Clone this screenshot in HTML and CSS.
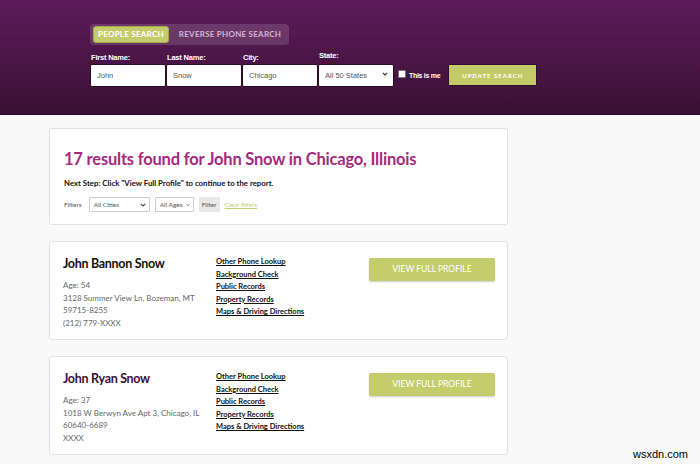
FILE: index.html
```html
<!DOCTYPE html>
<html lang="en">
  <head>
    <meta charset="UTF-8" />
    <meta name="viewport" content="width=device-width, initial-scale=1.0" />
    <title>People Search Results</title>
    <link rel="stylesheet" href="styles.css">
  </head>
  <body>
    <!-- Search header -->
    <div class="header">
      <div class="tabs">
        <span class="tab active">People Search</span>
        <span class="tab">Reverse Phone Search</span>
      </div>
      <form class="search-form">
        <div class="field">
          <label>First Name:</label>
          <input type="text" value="John" />
        </div>
        <div class="field">
          <label>Last Name:</label>
          <input type="text" value="Snow" />
        </div>
        <div class="field">
          <label>City:</label>
          <input type="text" value="Chicago" />
        </div>
        <div class="field">
          <label>State:</label>
          <div class="select-wrap">
            <select><option>All 50 States</option></select>
            <svg class="chevron" width="6" height="4" viewBox="0 0 6 4"><path d="M0.8 0.8 L3 3 L5.2 0.8" fill="none" stroke="#333" stroke-width="1.1"/></svg>
          </div>
        </div>
        <label class="this-is-me"><span class="box"></span>This is me</label>
        <button type="button" class="update-btn">Update Search</button>
      </form>
    </div>

    <div class="content">
      <!-- Summary -->
      <div class="card summary">
        <h1>17 results found for John Snow in Chicago, Illinois</h1>
        <p class="next-step">Next Step: Click "View Full Profile" to continue to the report.</p>
        <div class="filters">
          <span class="filters-label">Filters</span>
          <div class="mini-select wide">All Cities<svg width="6" height="4" viewBox="0 0 6 4"><path d="M0.8 0.8 L3 3 L5.2 0.8" fill="none" stroke="#444" stroke-width="1.1"/></svg></div>
          <div class="mini-select">All Ages<svg width="6" height="4" viewBox="0 0 6 4"><path d="M0.8 0.8 L3 3 L5.2 0.8" fill="none" stroke="#444" stroke-width="1.1"/></svg></div>
          <span class="filter-btn">Filter</span>
          <a href="#" class="clear">Clear filters</a>
        </div>
      </div>

      <!-- Results -->
      <div class="card result">
        <div class="info">
          <h2>John Bannon Snow</h2>
          <p>Age: 54</p>
          <p>3128 Summer View Ln, Bozeman, MT</p>
          <p>59715-8255</p>
          <p>(212) 779-XXXX</p>
        </div>
        <div class="links">
          <a href="#">Other Phone Lookup</a>
          <a href="#">Background Check</a>
          <a href="#">Public Records</a>
          <a href="#">Property Records</a>
          <a href="#">Maps &amp; Driving Directions</a>
        </div>
        <div class="action">
          <button type="button" class="profile-btn">View Full Profile</button>
        </div>
      </div>

      <div class="card result">
        <div class="info">
          <h2 class="visited">John Ryan Snow</h2>
          <p>Age: 37</p>
          <p>1018 W Berwyn Ave Apt 3, Chicago, IL</p>
          <p>60640-6689</p>
          <p>XXXX</p>
        </div>
        <div class="links">
          <a href="#">Other Phone Lookup</a>
          <a href="#">Background Check</a>
          <a href="#">Public Records</a>
          <a href="#">Property Records</a>
          <a href="#">Maps &amp; Driving Directions</a>
        </div>
        <div class="action">
          <button type="button" class="profile-btn">View Full Profile</button>
        </div>
      </div>
    </div>

    <div class="watermark">wsxdn.com</div>
  </body>
</html>
```

FILE: styles.css
```css
body {
  margin: 0;
  background-color: #f9f9f9;
  font-family: Lato, "Noto Sans", sans-serif;
  color: #222;
  height: 464px;
  overflow: hidden;
}

.header {
  height: 115px;
  box-sizing: border-box;
  padding: 24px 0 0 90px;
  background: linear-gradient(#5d1b5b, #3a1134);
  border-bottom: 1px solid #2a0a26;
}

.tabs {
  display: flex;
  width: fit-content;
  align-items: center;
  gap: 10px;
  padding: 2px 8px 2px 3px;
  background-color: rgba(255, 255, 255, 0.14);
  border-radius: 4px;
}

.tab {
  font-size: 8px;
  font-weight: 700;
  text-transform: uppercase;
  letter-spacing: 0.25px;
  color: #d6b3d4;
  line-height: 15px;
}

.tab.active {
  background-color: #c3cc69;
  color: #fff;
  padding: 0 4px;
  border-radius: 3px;
  border: 1px solid #a3ab4f;
}

.search-form {
  display: flex;
  align-items: flex-end;
  margin-top: 6px;
}

.field {
  display: flex;
  flex-direction: column;
  width: 76px;
}

.field label {
  font-family: "Liberation Sans", Arial, sans-serif;
  font-size: 7.5px;
  font-weight: 700;
  color: #fff;
  margin: 0 0 2px 1px;
  letter-spacing: -0.2px;
}

.field input,
.field select {
  box-sizing: border-box;
  width: 76px;
  height: 23px;
  margin: 0;
  padding: 0 6px;
  border: 1px solid #2d0c28;
  border-radius: 2px;
  background-color: #fff;
  font-family: "Liberation Sans", Arial, sans-serif;
  font-size: 7.5px;
  color: #555;
  outline: none;
}

.select-wrap {
  position: relative;
}

.field select {
  appearance: none;
  -webkit-appearance: none;
}

.chevron {
  position: absolute;
  right: 6px;
  top: 10px;
}

.this-is-me {
  display: flex;
  align-items: center;
  gap: 3px;
  height: 23px;
  margin-left: 4px;
  font-family: "Liberation Sans", Arial, sans-serif;
  font-size: 7px;
  font-weight: 700;
  color: #fff;
  letter-spacing: -0.3px;
}

.this-is-me .box {
  width: 6px;
  height: 6px;
  background: #fff;
  border: 1px solid #777;
  border-radius: 1px;
  margin-top: -3px;
}

.update-btn {
  box-sizing: border-box;
  width: 89px;
  height: 22px;
  margin: 0 0 1px 8px;
  background-color: #c3cb68;
  border: 1px solid #2e0e28;
  border-radius: 1px;
  color: #fff;
  font-family: Lato, sans-serif;
  font-size: 6px;
  font-weight: 700;
  letter-spacing: 1px;
  text-transform: uppercase;
}

.content {
  width: 459px;
  margin: 13px 0 0 49px;
  display: flex;
  flex-direction: column;
  gap: 16px;
}

.card {
  background-color: #fff;
  border: 1px solid #e2e2e2;
  border-radius: 3px;
}

.summary {
  padding: 20px 14px 12px;
}

.summary h1 {
  margin: 0;
  font-size: 16.5px;
  font-weight: 700;
  color: #a52a7d;
  letter-spacing: -0.2px;
}

.next-step {
  margin: 9px 0 0;
  font-size: 7.8px;
  font-weight: 700;
  color: #111;
}

.filters {
  display: flex;
  align-items: center;
  gap: 5px;
  margin-top: 9px;
  font-size: 6.5px;
  color: #555;
  white-space: nowrap;
}

.filters-label {
  margin-right: 2px;
}

.mini-select {
  display: flex;
  align-items: center;
  justify-content: space-between;
  gap: 3px;
  box-sizing: border-box;
  height: 15px;
  padding: 0 3px 0 4px;
  border: 1px solid #ccc;
  border-radius: 1px;
  width: 39px;
}

.mini-select.wide {
  width: 61px;
}

.filter-btn {
  background-color: #e8e8e8;
  padding: 0 3px;
  line-height: 15px;
  border-radius: 1px;
}

.clear {
  color: #c6cf70;
}

.result {
  display: grid;
  grid-template-columns: 153px 153px 126px;
  padding: 14px 13px 10px 13px;
}

.info h2 {
  margin: 0 0 8px;
  font-size: 12.5px;
  font-weight: 700;
  letter-spacing: -0.3px;
  color: #111;
}

.info h2.visited {
  color: #3b0d38;
}

.info p {
  margin: 0;
  font-size: 8px;
  line-height: 12.5px;
  color: #666;
}

.links {
  display: flex;
  flex-direction: column;
}

.links a {
  font-size: 7.5px;
  font-weight: 700;
  line-height: 12.5px;
  color: #111;
  text-decoration: underline;
}

.profile-btn {
  width: 126px;
  height: 23px;
  margin: 0;
  background-color: #c3cd6b;
  border: none;
  border-radius: 2px;
  box-shadow: 0 1px 2px rgba(0, 0, 0, 0.2);
  color: #fff;
  font-family: Lato, sans-serif;
  font-size: 8.5px;
  text-transform: uppercase;
}

.watermark {
  position: absolute;
  right: 12px;
  bottom: 4px;
  font-family: "Liberation Sans", Arial, sans-serif;
  font-size: 11px;
  color: #000;
}
```
